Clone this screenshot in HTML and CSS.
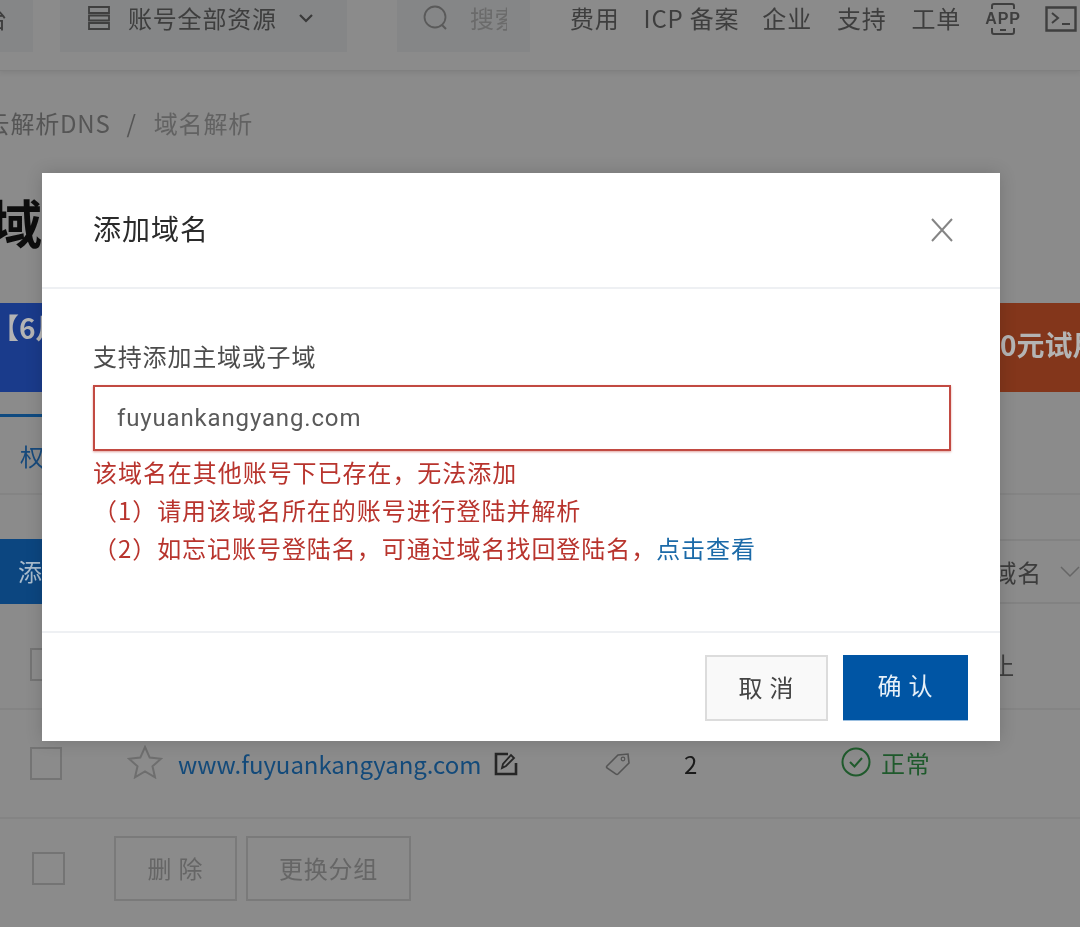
FILE: index.html
```html
<!DOCTYPE html>
<html lang="zh">
<head>
<meta charset="utf-8">
<title>添加域名</title>
<link rel="stylesheet" href="styles.css">
</head>
<body>
<div class="page">
  <div class="bg">
    <header class="topbar">
      <div class="tbox tbox-home"><span class="clip-left">控制台</span></div>
      <div class="tbox tbox-res">
        <svg class="i-list" viewBox="0 0 22 24" width="22" height="24"><path d="M1 1h20v6H1zM1 9.500h20v5H1zM1 17h20v6H1z" fill="none" stroke="#3f3f3f" stroke-width="1.800"/></svg>
        <span>账号全部资源</span>
        <svg class="i-chev" viewBox="0 0 16 10" width="16" height="10"><path d="M2 2l6 6 6-6" fill="none" stroke="#3a3a3a" stroke-width="2.200"/></svg>
      </div>
      <div class="tbox tbox-search">
        <svg viewBox="0 0 26 28" width="26" height="28"><circle cx="12" cy="13" r="10.500" fill="none" stroke="#5a5a5a" stroke-width="1.800"/><path d="M19 21l4 4" stroke="#5a5a5a" stroke-width="2"/></svg>
        <span class="search-text">搜索文档</span>
      </div>
      <nav class="nav">
        <span>费用</span><span class="nav-icp">ICP 备案</span><span>企业</span><span>支持</span><span>工单</span>
        <svg class="nav-app" viewBox="0 0 36 34" width="36" height="34"><path d="M7 7V4q0-2 2-2h18q2 0 2 2v3M7 26v4q0 2 2 2h18q2 0 2-2v-4" fill="none" stroke="#3f3f3f" stroke-width="2"/><path d="M15 28h6" stroke="#3f3f3f" stroke-width="2"/><text x="18" y="22" text-anchor="middle" class="app-text">APP</text></svg>
        <svg viewBox="0 0 32 26" width="32" height="26"><path d="M1.500 1.500h29v23h-29z" fill="none" stroke="#3f3f3f" stroke-width="2.400"/><path d="M7 7l6 5-6 5M17 18h8" fill="none" stroke="#3f3f3f" stroke-width="2"/></svg>
      </nav>
    </header>

    <div class="crumbs"><span class="clip-crumb">阿里云解析DNS</span><span class="sep">/</span><span class="crumb-now">域名解析</span></div>
    <h1 class="title">域名解析</h1>

    <div class="banner">
      <div class="banner-l"><span>【6月</span></div>
      <div class="banner-r"><span>0元试用</span></div>
    </div>

    <div class="tabs"><div class="tab">权威域名</div></div>

    <div class="toolbar">
      <div class="btn-add">添加域名</div>
      <div class="select"><span>域名</span>
        <svg viewBox="0 0 20 12" width="20" height="12"><path d="M1 1l9 9 9-9" fill="none" stroke="#666" stroke-width="1.500"/></svg>
      </div>
    </div>

    <div class="row row-head">
      <span class="check"></span>
      <span class="stop">禁止</span>
    </div>

    <div class="row row-data">
      <span class="check"></span>
      <svg class="star" viewBox="0 0 36 34" width="36" height="34"><path d="M18 2l4.700 10.600 11.300 1.200-8.500 7.500 2.500 11L18 26.500 8 32.300l2.500-11L2 13.800l11.300-1.200z" fill="none" stroke="#6e6e6e" stroke-width="2"/></svg>
      <a class="domain">www.fuyuankangyang.com</a>
      <svg class="edit" viewBox="0 0 24 24" width="24" height="24"><path d="M14 2H2v20h20V11" fill="none" stroke="#262626" stroke-width="2.600"/><path d="M8 16l1-4 8-9 3 3-8 8z" fill="none" stroke="#262626" stroke-width="1.800"/></svg>
      <svg class="tag" viewBox="0 0 26 24" width="26" height="24"><path d="M2 14L13 3l10-1 1 9-11 11q-1 1-2 0l-9-6q-1-1 0-2z" fill="none" stroke="#555" stroke-width="1.600"/><circle cx="18" cy="7" r="1.800" fill="none" stroke="#555" stroke-width="1.200"/></svg>
      <span class="count">2</span>
      <svg class="ok" viewBox="0 0 30 30" width="30" height="30"><circle cx="15" cy="15" r="13.500" fill="none" stroke="#1f5a2c" stroke-width="2"/><path d="M9 15l4.500 4.500L21 11" fill="none" stroke="#1f5a2c" stroke-width="2"/></svg>
      <span class="status">正常</span>
    </div>

    <div class="batch">
      <span class="check check-b"></span>
      <div class="btn-ghost btn-del">删 除</div>
      <div class="btn-ghost btn-move">更换分组</div>
    </div>
  </div>

  <section class="modal">
    <div class="modal-head">
      <h2>添加域名</h2>
      <svg viewBox="0 0 22 24" width="22" height="24"><path d="M1 1l20 22M21 1L1 23" stroke="#858585" stroke-width="2" fill="none"/></svg>
    </div>
    <div class="modal-body">
      <div class="label">支持添加主域或子域</div>
      <div class="input">fuyuankangyang.com</div>
      <div class="error">
        <div>该域名在其他账号下已存在，无法添加</div>
        <div class="ind">（1）请用该域名所在的账号进行登陆并解析</div>
        <div class="ind">（2）如忘记账号登陆名，可通过域名找回登陆名，<a>点击查看</a></div>
      </div>
    </div>
    <div class="modal-foot">
      <div class="btn btn-cancel">取 消</div>
      <div class="btn btn-ok">确 认</div>
    </div>
  </section>
</div>
</body>
</html>
```
FILE: styles.css
```css
* { box-sizing: border-box; }
html, body { margin: 0; padding: 0; }
body { background: #8b8b8b; }
.page {
  position: relative;
  width: 1080px;
  height: 927px;
  overflow: hidden;
  background: #8b8b8b;
  color: #3e3e3e;
  font-family: "Noto Sans CJK SC", "Noto Sans", sans-serif;
  font-size: 24px;
  letter-spacing: .8px;
  filter: blur(.55px);
}
.bg { display: flex; flex-direction: column; height: 100%; }

.topbar {
  display: flex;
  align-items: flex-start;
  flex: none;
  height: 71px;
  border-bottom: 1px solid #808080;
  box-shadow: 0 2px 5px rgba(0,0,0,.08);
}
.tbox {
  display: flex;
  align-items: center;
  height: 52px;
  padding-bottom: 17px;
  background: #858687;
  overflow: hidden;
}
.tbox-home { width: 33px; justify-content: flex-end; padding-right: 25px; }
.clip-left { white-space: nowrap; flex: none; }
.tbox-res { width: 287px; margin-left: 27px; padding-left: 28px; }
.i-list { margin-right: 18px; flex: none; }
.i-chev { margin-left: 21px; flex: none; }
.tbox-search { width: 133px; margin-left: 50px; padding-left: 26px; }
.search-text { margin-left: 21px; width: 37px; overflow: hidden; white-space: nowrap; flex: none; color: #6b6b6b; }
.nav { display: flex; align-items: center; gap: 25px; margin-left: 40px; height: 34px; white-space: nowrap; }
.nav svg { flex: none; margin-top: 4px; }
.nav svg:last-child { margin-left: -1px; }
.nav-icp { margin: 0 -2px 0 -1px; }
.nav-app { margin-left: -1px; }
.app-text { font: 700 16px "Liberation Sans", sans-serif; fill: #3f3f3f; }

.crumbs { display: flex; align-items: center; gap: 16px; height: 48px; margin-top: 27px; margin-left: -64px; color: #555; }
.sep { color: #555; }
.crumb-now { color: #626262; margin-left: 1px; }

.title { margin: 46px 0 0 -10px; height: 62px; font-size: 52px; line-height: 60px; font-weight: 700; color: #0d0d0d; white-space: nowrap; letter-spacing: 0; }

.banner { display: flex; flex: none; height: 89px; margin-top: 49px; font-weight: 700; font-size: 28px; color: #b4b4b4; }
.banner-l, .banner-r { flex: 0 0 50%; white-space: nowrap; overflow: hidden; letter-spacing: 0; }
.banner-l { background: #1a3b8b; padding-top: 4px; }
.banner-l span { margin-left: -9px; }
.banner-r { background: #83361b; padding-top: 21px; padding-left: 460px; }

.tabs { flex: none; height: 103px; padding-top: 22px; border-bottom: 2px solid #848484; }
.tab { display: inline-block; height: 81px; padding: 22px 20px 0; border-top: 3px solid #0f4a80; color: #174a7c; line-height: 34px; font-size: 24px; }

.toolbar { display: flex; justify-content: space-between; align-items: flex-start; flex: none; height: 110px; padding-top: 44px; }
.btn-add { width: 130px; height: 65px; padding-left: 18px; background: #0c4680; color: #a9bccd; line-height: 64px; }
.select { display: flex; align-items: center; justify-content: flex-end; gap: 18px; width: 300px; height: 65px; border: solid #828282; border-width: 2px 0; color: #3c3c3c; }

.row { display: flex; align-items: center; flex: none; padding-left: 30px; border-bottom: 2px solid #848484; }
.row-head { height: 105px; justify-content: space-between; padding: 16px 65px 0 30px; }
.row-data { height: 109px; }
.check { display: block; flex: none; width: 32px; height: 33px; border: 2px solid #747474; }
.star { margin: 0 0 4px 65px; flex: none; }
.domain { margin-left: 15px; color: #134a7a; letter-spacing: -.05px; white-space: nowrap; width: 316px; }
.edit { flex: none; }
.tag { margin-left: 87px; flex: none; }
.count { margin-left: 53px; width: 157px; color: #1a1a1a; letter-spacing: 0; }
.ok { flex: none; margin-bottom: 3px; }
.status { margin: 0 0 3px 10px; color: #1f5a2c; }

.batch { display: flex; align-items: center; flex: none; padding: 17px 0 0 32px; }
.check-b { height: 33px; width: 33px; }
.btn-ghost { height: 65px; border: 2px solid #7a7a7a; color: #666; line-height: 59px; text-align: center; }
.btn-del { width: 123px; margin-left: 49px; }
.btn-move { width: 165px; margin-left: 9px; }

.modal {
  position: absolute;
  left: 42px;
  top: 173px;
  width: 958px;
  height: 568px;
  display: flex;
  flex-direction: column;
  background: #fff;
  box-shadow: 0 0 16px rgba(0,0,0,.16);
}
.modal-head {
  display: flex;
  align-items: center;
  justify-content: space-between;
  flex: none;
  height: 116px;
  padding: 0 47px 0 51px;
  border-bottom: 2px solid #eef0f3;
}
.modal-head h2 { margin: 0 0 4px; font-size: 28px; font-weight: 400; color: #2b2b2b; letter-spacing: 1px; }
.modal-body { flex: 1; padding: 50px 49px 0 51px; }
.label { height: 36px; line-height: 34px; color: #4c4c4c; }
.input {
  height: 66px;
  margin-top: 10px;
  padding-left: 22px;
  border: 2px solid #c24a42;
  box-shadow: 0 1px 2px rgba(194,74,66,.5);
  color: #5a5a5a;
  font-family: "Roboto", "Noto Sans", sans-serif;
  line-height: 62px;
  letter-spacing: .85px;
}
.error { margin-top: 2px; color: #b8342d; line-height: 38px; letter-spacing: .95px; }
.error a { color: #1b6aa8; }
.modal-foot {
  display: flex;
  justify-content: flex-end;
  gap: 15px;
  flex: none;
  height: 110px;
  padding: 22px 32px 0 0;
  border-top: 2px solid #eef0f3;
}
.btn { width: 124px; height: 66px; line-height: 60px; text-align: center; }
.btn-cancel { width: 123px; background: #f9f9f9; border: 2px solid #dcdcdc; color: #444; }
.btn-ok { width: 125px; background: #0055a4; color: #e6f0f8; border-bottom: 1px solid #9bbfe0; }
```
